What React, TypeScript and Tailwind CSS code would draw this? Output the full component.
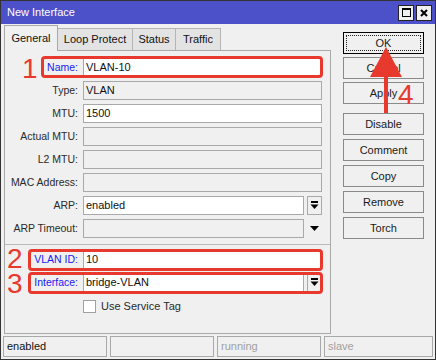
import * as React from "react";

const RED = "border-[#e8392e]";

type RowProps = {
  label: string;
  value?: string;
  editable?: boolean;
  blue?: boolean;
  drop?: "box" | "plain";
};

function DropIcon() {
  return (
    <svg width="9" height="9" viewBox="0 0 9 9">
      <rect x="1" y="0" width="7" height="2" fill="#000" />
      <polygon points="0.5,3.5 8.5,3.5 4.5,8" fill="#000" />
    </svg>
  );
}

function Row({ label, value, editable, blue, drop }: RowProps) {
  return (
    <div className="flex items-center h-[19px] pr-[8px]">
      <span
        className={
          "w-[73px] text-right whitespace-nowrap " +
          (blue ? "text-[#2020f0]" : "text-[#2a2a2a]")
        }
      >
        {label}:
      </span>
      <div
        className={
          "ml-[5px] flex-1 h-full border border-[#a9a9a9] px-[2px] flex items-center text-[#111] text-[11px] " +
          (editable ? "bg-white" : "bg-[#f0f0f0]")
        }
      >
        {value}
      </div>
      {drop === "box" && (
        <div className="ml-[3px] w-[15px] h-full border border-[#a9a9a9] bg-[#f0f0f0] flex items-center justify-center">
          <DropIcon />
        </div>
      )}
      {drop === "plain" && (
        <div className="ml-[3px] w-[15px] h-full flex items-center justify-center">
          <svg width="9" height="5" viewBox="0 0 9 5">
            <polygon points="0,0 9,0 4.5,5" fill="#000" />
          </svg>
        </div>
      )}
    </div>
  );
}

function Btn({ children, focused }: { children: React.ReactNode; focused?: boolean }) {
  return (
    <div
      className={
        "relative h-[22px] flex items-center justify-center bg-[#f0f0f0] text-[#1a1a1a] border " +
        (focused ? "border-black" : "border-[#8a8a8a]")
      }
    >
      {focused && (
        <div className="absolute inset-[2px] border border-dotted border-[#222]" />
      )}
      <span className="relative text-[11px]">{children}</span>
    </div>
  );
}

export default function App() {
  return (
    <div className="relative w-[436px] h-[360px] border border-[#333] bg-[#f0f0f0] flex flex-col text-[10.5px] leading-none font-['Liberation_Sans',Arial,sans-serif] overflow-hidden">
      {/* title bar */}
      <div className="h-[23px] bg-[#4c50c9] flex items-center pl-[6px] pr-[3px]">
        <span className="text-white text-[11px]">New Interface</span>
        <div className="ml-auto flex gap-[2px]">
          <div className="w-[16px] h-[16px] border border-[#222] bg-[#f0f0f0] flex items-center justify-center">
            <div className="w-[9px] h-[9px] border border-black border-t-2" />
          </div>
          <div className="w-[16px] h-[16px] border border-[#222] bg-[#f0f0f0] flex items-center justify-center">
            <svg width="8" height="8" viewBox="0 0 8 8">
              <path d="M1 1 L7 7 M7 1 L1 7" stroke="#000" strokeWidth="2" />
            </svg>
          </div>
        </div>
      </div>

      <div className="flex flex-1 pl-[3px]">
        {/* left: tabs + panel */}
        <div className="w-[327px] flex flex-col">
          <div className="h-[26px] flex items-end text-[11px]">
            <div className="relative z-10 w-[54px] h-[26px] -mb-px border border-b-0 border-[#a9a9a9] bg-[#f0f0f0] flex items-center justify-center text-[#111]">
              General
            </div>
            <div className="w-[75px] h-[22px] border border-l-0 border-b-0 border-[#b5b5b5] bg-[#e3e3e3] flex items-center justify-center text-[#111]">
              Loop Protect
            </div>
            <div className="w-[43px] h-[22px] border border-l-0 border-b-0 border-[#b5b5b5] bg-[#e3e3e3] flex items-center justify-center text-[#111]">
              Status
            </div>
            <div className="w-[45px] h-[22px] border border-l-0 border-b-0 border-[#b5b5b5] bg-[#e3e3e3] flex items-center justify-center text-[#111]">
              Traffic
            </div>
          </div>
          <div className="h-[284px] border border-[#a9a9a9] pt-[7px] flex flex-col">
            <div className="flex flex-col gap-[4px]">
              <Row label="Name" value="VLAN-10" editable blue />
              <Row label="Type" value="VLAN" />
              <Row label="MTU" value="1500" editable />
              <Row label="Actual MTU" />
              <Row label="L2 MTU" />
              <Row label="MAC Address" />
              <Row label="ARP" value="enabled" editable drop="box" />
              <Row label="ARP Timeout" drop="plain" />
            </div>
            <div className="mt-[6px] h-px bg-[#b9b9b9]" />
            <div className="mt-[5px] flex flex-col gap-[4px]">
              <Row label="VLAN ID" value="10" editable blue />
              <Row label="Interface" value="bridge-VLAN" editable blue drop="box" />
              <div className="flex items-center h-[19px] mt-[1px] pl-[78px]">
                <div className="w-[13px] h-[13px] border border-[#a0a0a0] bg-white" />
                <span className="ml-[5px] text-[#2a2a2a] text-[11px]">Use Service Tag</span>
              </div>
            </div>
          </div>
        </div>

        {/* right: buttons */}
        <div className="ml-[12px] w-[81px] pt-[8px] flex flex-col">
          <div className="flex flex-col gap-[3px]">
            <Btn focused>OK</Btn>
            <Btn>Cancel</Btn>
            <Btn>Apply</Btn>
          </div>
          <div className="mt-[9px] flex flex-col gap-[4px]">
            <Btn>Disable</Btn>
            <Btn>Comment</Btn>
            <Btn>Copy</Btn>
            <Btn>Remove</Btn>
            <Btn>Torch</Btn>
          </div>
        </div>
      </div>

      {/* status bar */}
      <div className="h-[21px] mt-[2px] mb-[2px] px-[2px] flex gap-[3px] text-[11px]">
        <div className="w-[104px] border border-[#a9a9a9] flex items-center pl-[3px] text-[#111]">enabled</div>
        <div className="w-[104px] border border-[#a9a9a9]" />
        <div className="w-[104px] border border-[#a9a9a9] flex items-center pl-[3px] text-[#a0a0a0]">running</div>
        <div className="w-[109px] border border-[#a9a9a9] flex items-center pl-[3px] text-[#a0a0a0]">slave</div>
      </div>

      {/* annotations */}
      <div className={"absolute left-[40px] top-[55px] w-[282px] h-[22px] border-[3px] rounded-[4px] " + RED} />
      <div className={"absolute left-[27px] top-[248px] w-[295px] h-[22px] border-[3px] rounded-[4px] " + RED} />
      <div className={"absolute left-[27px] top-[271px] w-[295px] h-[22px] border-[3px] rounded-[4px] " + RED} />
      <span className="absolute left-[21px] top-[57px] text-[28px] leading-[21px] text-[#e8392e]">1</span>
      <span className="absolute left-[6px] top-[248px] text-[28px] leading-[20px] text-[#e8392e]">2</span>
      <span className="absolute left-[6px] top-[273px] text-[28px] leading-[20px] text-[#e8392e]">3</span>
      <span className="absolute left-[397px] top-[83px] text-[28px] leading-[21px] text-[#e8392e]">4</span>
      <svg className="absolute left-[366px] top-[44px]" width="38" height="70" viewBox="0 0 38 70">
        <polygon points="19,2 3,32 35,32" fill="#e8392e" />
        <rect x="17" y="30" width="4" height="38" fill="#e8392e" />
      </svg>
    </div>
  );
}
